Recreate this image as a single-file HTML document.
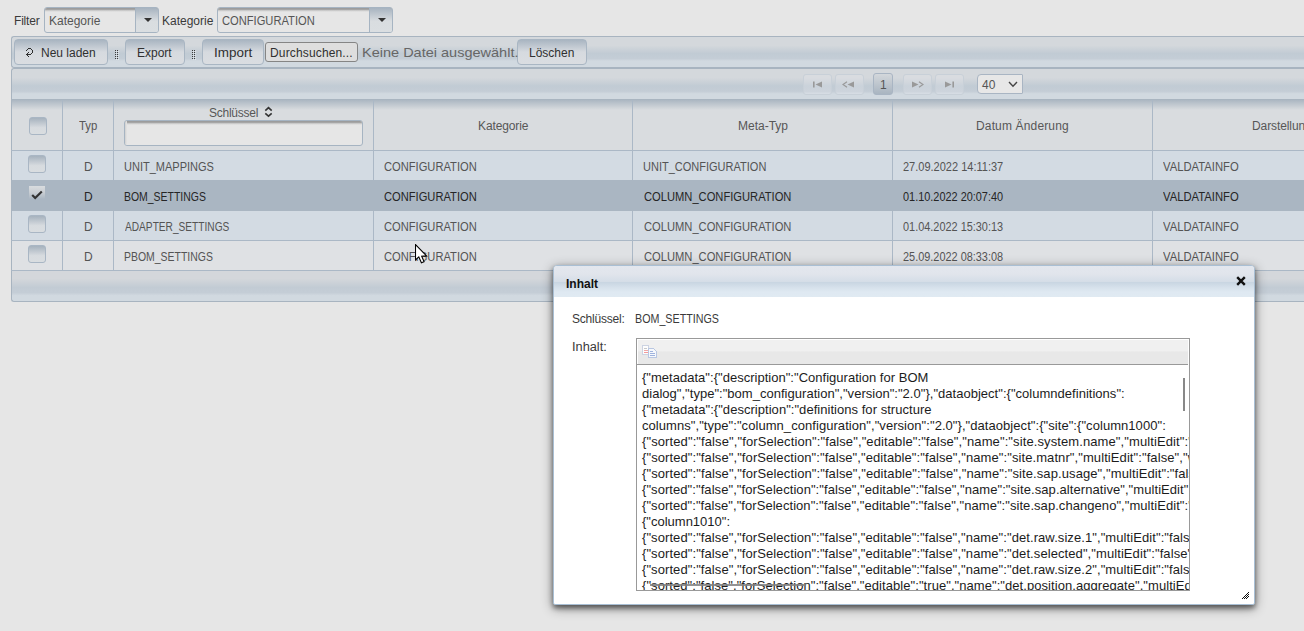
<!DOCTYPE html>
<html><head><meta charset="utf-8">
<style>
*{box-sizing:border-box;margin:0;padding:0}
html,body{width:1304px;height:631px;overflow:hidden}
body{background:#e6e6e6;font-family:"Liberation Sans",sans-serif;font-size:12px;color:#444;position:relative}
.a{position:absolute}
.t{position:absolute;white-space:pre;line-height:20px}
.sel{position:absolute;border:1px solid #a6b4c2;border-radius:3px;background:#e6e6e6;overflow:hidden}
.sel .in{position:absolute;left:0;top:0;right:0;height:4px;background:linear-gradient(#979797 0px,#a6a6a6 1.5px,#d4d4d4 2.8px,#e6e6e6 4px)}
.sel .bt{position:absolute;top:0;bottom:0;right:0;border-left:1px solid #a6b4c2;background:linear-gradient(#a7b3bf 0%,#d9dde0 55%,#dadee1 100%)}
.arr{position:absolute;width:0;height:0;border-left:4px solid transparent;border-right:4px solid transparent;border-top:4px solid #333}
.bar{position:absolute;left:11px;width:1300px;border:1px solid #a8b4c0;border-right:none;background:linear-gradient(#d4d8dc 0%,#d4d8dc 28%,#c1cbd4 55%,#c4cdd6 72%,#d1d9e0 80%,#d1d9e0 100%)}
.btn{position:absolute;top:39px;height:26px;border:1px solid #a9b6c3;border-radius:4px;background:linear-gradient(#a9b5c1 0%,#d6dadf 50%,#dadde1 100%)}
.grip{position:absolute;width:4px;height:10px;background-image:radial-gradient(circle at 1px 1px,#444 0.7px,transparent 1px);background-size:2px 2px}
.cb{position:absolute;width:18px;height:18px;border:1px solid #a9b6c4;border-radius:3px;background:linear-gradient(#a6b2be 0%,#d7dbdf 60%,#d9dde0 100%)}
.pb{position:absolute;top:74px;height:21px;width:29px;border:1px solid #c8d0d8;border-radius:3px;background:rgba(235,238,241,.22)}
.row{position:absolute;left:11px;width:1300px;border-left:1px solid #a8b4c0}
.vl{position:absolute;width:1px;background:#abb8c6}
.hl{position:absolute;left:11px;width:1300px;height:1px;background:#abb8c6}
.ta{position:absolute;white-space:pre;font-family:"Liberation Sans",sans-serif;font-size:13px;line-height:16px;color:#1c1c1c}
</style></head><body>

<!-- filter bar -->
<div class="sel" style="left:44px;top:7px;width:115px;height:26px"><div class="in"></div><div class="bt" style="width:23px"></div></div>
<div class="arr" style="left:144px;top:18px"></div>
<div class="sel" style="left:217px;top:7px;width:176px;height:26px"><div class="in"></div><div class="bt" style="width:23px"></div></div>
<div class="arr" style="left:378px;top:18px"></div>

<!-- toolbar -->
<div class="bar" style="top:36px;height:32px;border-radius:3px 0 0 3px"></div>
<div class="btn" style="left:14px;width:94px"></div>
<svg class="a" style="left:25px;top:47px" width="10" height="11" fill="#2e2e2e"><rect x="3" y="1" width="1" height="1"/><rect x="4" y="1" width="1" height="1"/><rect x="5" y="1" width="1" height="1"/><rect x="2" y="2" width="1" height="1"/><rect x="6" y="2" width="1" height="1"/><rect x="1" y="3" width="1" height="1"/><rect x="7" y="3" width="1" height="1"/><rect x="7" y="4" width="1" height="1"/><rect x="3" y="5" width="1" height="1"/><rect x="7" y="5" width="1" height="1"/><rect x="2" y="6" width="1" height="1"/><rect x="6" y="6" width="1" height="1"/><rect x="1" y="7" width="1" height="1"/><rect x="2" y="7" width="1" height="1"/><rect x="3" y="7" width="1" height="1"/><rect x="4" y="7" width="1" height="1"/><rect x="5" y="7" width="1" height="1"/><rect x="2" y="8" width="1" height="1"/><rect x="3" y="9" width="1" height="1"/></svg>
<svg class="a" style="left:115px;top:50px" width="4" height="11"><rect x="1" y="1" width="1" height="1" fill="#f4f6f8" opacity=".6"/><rect x="1" y="3" width="1" height="1" fill="#f4f6f8" opacity=".6"/><rect x="1" y="5" width="1" height="1" fill="#f4f6f8" opacity=".6"/><rect x="1" y="7" width="1" height="1" fill="#f4f6f8" opacity=".6"/><rect x="1" y="9" width="1" height="1" fill="#f4f6f8" opacity=".6"/><rect x="3" y="1" width="1" height="1" fill="#f4f6f8" opacity=".6"/><rect x="3" y="3" width="1" height="1" fill="#f4f6f8" opacity=".6"/><rect x="3" y="5" width="1" height="1" fill="#f4f6f8" opacity=".6"/><rect x="3" y="7" width="1" height="1" fill="#f4f6f8" opacity=".6"/><rect x="3" y="9" width="1" height="1" fill="#f4f6f8" opacity=".6"/><rect x="0" y="0" width="1" height="1" fill="#3c3c3c"/><rect x="0" y="2" width="1" height="1" fill="#3c3c3c"/><rect x="0" y="4" width="1" height="1" fill="#3c3c3c"/><rect x="0" y="6" width="1" height="1" fill="#3c3c3c"/><rect x="0" y="8" width="1" height="1" fill="#3c3c3c"/><rect x="2" y="0" width="1" height="1" fill="#3c3c3c"/><rect x="2" y="2" width="1" height="1" fill="#3c3c3c"/><rect x="2" y="4" width="1" height="1" fill="#3c3c3c"/><rect x="2" y="6" width="1" height="1" fill="#3c3c3c"/><rect x="2" y="8" width="1" height="1" fill="#3c3c3c"/></svg>
<div class="btn" style="left:125px;width:60px"></div>
<svg class="a" style="left:192px;top:50px" width="4" height="11"><rect x="1" y="1" width="1" height="1" fill="#f4f6f8" opacity=".6"/><rect x="1" y="3" width="1" height="1" fill="#f4f6f8" opacity=".6"/><rect x="1" y="5" width="1" height="1" fill="#f4f6f8" opacity=".6"/><rect x="1" y="7" width="1" height="1" fill="#f4f6f8" opacity=".6"/><rect x="1" y="9" width="1" height="1" fill="#f4f6f8" opacity=".6"/><rect x="3" y="1" width="1" height="1" fill="#f4f6f8" opacity=".6"/><rect x="3" y="3" width="1" height="1" fill="#f4f6f8" opacity=".6"/><rect x="3" y="5" width="1" height="1" fill="#f4f6f8" opacity=".6"/><rect x="3" y="7" width="1" height="1" fill="#f4f6f8" opacity=".6"/><rect x="3" y="9" width="1" height="1" fill="#f4f6f8" opacity=".6"/><rect x="0" y="0" width="1" height="1" fill="#3c3c3c"/><rect x="0" y="2" width="1" height="1" fill="#3c3c3c"/><rect x="0" y="4" width="1" height="1" fill="#3c3c3c"/><rect x="0" y="6" width="1" height="1" fill="#3c3c3c"/><rect x="0" y="8" width="1" height="1" fill="#3c3c3c"/><rect x="2" y="0" width="1" height="1" fill="#3c3c3c"/><rect x="2" y="2" width="1" height="1" fill="#3c3c3c"/><rect x="2" y="4" width="1" height="1" fill="#3c3c3c"/><rect x="2" y="6" width="1" height="1" fill="#3c3c3c"/><rect x="2" y="8" width="1" height="1" fill="#3c3c3c"/></svg>
<div class="btn" style="left:202px;width:62px"></div>
<div class="a" style="left:265px;top:42px;width:93px;height:20px;border:1px solid #858585;border-radius:3px;background:#dedede"></div>
<div class="btn" style="left:517px;width:70px"></div>

<!-- pager -->
<div class="bar" style="top:68px;height:32px;border-bottom:none;border-top-left-radius:3px"></div>
<div class="pb" style="left:803px"></div>
<div class="pb" style="left:835px"></div>
<div class="a" style="left:873px;top:73px;width:20px;height:22px;border:1px solid #a9b5c3;border-radius:3px;background:linear-gradient(#d3d7db,#a9b5c1)"></div>
<div class="pb" style="left:903px"></div>
<div class="pb" style="left:935px"></div>
<svg class="a" style="left:812px;top:81px" width="11" height="7"><rect x="1" y="0.5" width="1.6" height="6" fill="#999"/><path d="M3.5 3.5 L10 0.5 L10 6.5Z" fill="#999"/></svg>
<svg class="a" style="left:842px;top:81px" width="13" height="7"><path d="M5 0.8 L1 3.5 L5 6.2" fill="none" stroke="#999" stroke-width="1.2"/><path d="M5.5 3.5 L12 0.5 L12 6.5Z" fill="#999"/></svg>
<svg class="a" style="left:911px;top:81px" width="13" height="7"><path d="M1 0.5 L7.5 3.5 L1 6.5Z" fill="#999"/><path d="M8 0.8 L12 3.5 L8 6.2" fill="none" stroke="#999" stroke-width="1.2"/></svg>
<svg class="a" style="left:944px;top:81px" width="11" height="7"><path d="M1 0.5 L7.5 3.5 L1 6.5Z" fill="#999"/><rect x="8.4" y="0.5" width="1.6" height="6" fill="#999"/></svg>
<div class="a" style="left:977px;top:74px;width:46px;height:20px;border:1px solid #a9b5c3;border-radius:4px 1px 1px 4px;background:#e7e7e7"></div>
<svg class="a" style="left:1008px;top:81px" width="10" height="7"><path d="M1 1 L5 5.2 L9 1" fill="none" stroke="#444" stroke-width="1.4"/></svg>

<!-- grid header -->
<div class="row" style="top:99px;height:52px;background:linear-gradient(#a7b3bf 0px,#d9dcdf 11px,#d9dcdf 100%)"></div>
<div class="hl" style="top:150px"></div>
<!-- rows -->
<div class="row" style="top:151px;height:29px;background:#d3dbe3"></div>
<div class="row" style="top:210px;height:30px;background:#d3dbe3"></div>
<div class="hl" style="top:240px"></div>
<div class="row" style="top:241px;height:29px;background:#dfe1e4"></div>
<div class="hl" style="top:270px"></div>
<div class="vl" style="left:62px;top:100px;height:171px"></div>
<div class="vl" style="left:113px;top:100px;height:171px"></div>
<div class="vl" style="left:373px;top:100px;height:171px"></div>
<div class="vl" style="left:632px;top:100px;height:171px"></div>
<div class="vl" style="left:892px;top:100px;height:171px"></div>
<div class="vl" style="left:1152px;top:100px;height:171px"></div>
<div class="row" style="top:180px;height:31px;background:#aab6c2"></div>
<!-- footer -->
<div class="bar" style="top:271px;height:31px;border-top:none;border-bottom-left-radius:3px;background:linear-gradient(#d4d7db 0%,#d4d7db 25%,#c2cbd4 55%,#c4cdd6 72%,#d1d9e0 82%,#d1d9e0 100%)"></div>

<div class="cb" style="left:29px;top:117px"></div>
<svg class="a" style="left:264px;top:106px" width="10" height="12"><path d="M1.3 4.6 L4.5 1.6 L7.7 4.6 M1.3 7.4 L4.5 10.2 L7.7 7.4" fill="none" stroke="#333" stroke-width="1.6"/></svg>
<div class="a" style="left:124px;top:120px;width:239px;height:26px;border:1px solid #a6b4c2;border-radius:3px;background:#e6e6e6;overflow:hidden"><div class="a" style="left:0;top:0;right:0;height:4px;background:linear-gradient(#979797 0px,#a6a6a6 1.5px,#d4d4d4 2.8px,#e6e6e6 4px)"></div><div class="a" style="left:0;top:0;bottom:0;width:2px;background:linear-gradient(90deg,#cfcfcf,#e6e6e6)"></div></div>

<div class="cb" style="left:28px;top:155px"></div>
<div class="a" style="left:29px;top:186px;width:16px;height:13px;background:linear-gradient(#d9dcdf 0%,#c9ced3 50%,#aab6c2 100%)"></div>
<svg class="a" style="left:31px;top:190px" width="12" height="10"><path d="M1.2 5 L4.2 8 L10.8 1.5" fill="none" stroke="#333" stroke-width="2.2"/></svg>
<div class="cb" style="left:28px;top:215px"></div>
<div class="cb" style="left:28px;top:245px"></div>

<div class="t" style="left:14px;top:11px;font-size:12px;color:#3a3a3a;letter-spacing:-0.20px">Filter</div>
<div class="t" style="left:49px;top:11px;font-size:12px;color:#555;letter-spacing:0.00px">Kategorie</div>
<div class="t" style="left:162px;top:11px;font-size:12px;color:#3a3a3a;letter-spacing:0.00px">Kategorie</div>
<div class="t" style="left:222.00px;top:11px;font-size:12px;color:#555;transform:scaleX(0.9293);transform-origin:0 0">CONFIGURATION</div>
<div class="t" style="left:41px;top:43px;font-size:12px;color:#303030;letter-spacing:0.00px">Neu laden</div>
<div class="t" style="left:137px;top:43px;font-size:12px;color:#303030;letter-spacing:0.00px">Export</div>
<div class="t" style="left:213.88px;top:43px;font-size:12px;color:#303030;transform:scaleX(1.1212);transform-origin:0 0">Import</div>
<div class="t" style="left:270px;top:43px;font-size:12px;color:#303030;letter-spacing:0.15px">Durchsuchen...</div>
<div class="t" style="left:529px;top:43px;font-size:12px;color:#303030;letter-spacing:0.00px">Löschen</div>
<div class="t" style="left:361.88px;top:43px;font-size:13px;color:#666;transform:scaleX(1.1159);transform-origin:0 0">Keine Datei ausgewählt.</div>
<div class="t" style="left:880px;top:75px;font-size:12px;color:#555;letter-spacing:0.00px">1</div>
<div class="t" style="left:982px;top:75px;font-size:12px;color:#555;letter-spacing:0.00px">40</div>
<div class="t" style="left:79.00px;top:116px;font-size:12px;color:#575757;transform:scaleX(0.9474);transform-origin:0 0">Typ</div>
<div class="t" style="left:209px;top:103px;font-size:12px;color:#575757;letter-spacing:-0.25px">Schlüssel</div>
<div class="t" style="left:478px;top:116px;font-size:12px;color:#575757;letter-spacing:-0.12px">Kategorie</div>
<div class="t" style="left:738px;top:116px;font-size:12px;color:#575757;letter-spacing:0.00px">Meta-Typ</div>
<div class="t" style="left:976px;top:116px;font-size:12px;color:#575757;letter-spacing:0.15px">Datum Änderung</div>
<div class="t" style="left:1252px;top:116px;font-size:12px;color:#575757;letter-spacing:-0.10px">Darstellung</div>
<div class="t" style="left:84px;top:157px;font-size:12px;color:#545454;letter-spacing:0.00px">D</div>
<div class="t" style="left:124.08px;top:157px;font-size:12px;color:#545454;transform:scaleX(0.9175);transform-origin:0 0">UNIT_MAPPINGS</div>
<div class="t" style="left:384.00px;top:157px;font-size:12px;color:#545454;transform:scaleX(0.9293);transform-origin:0 0">CONFIGURATION</div>
<div class="t" style="left:643.08px;top:157px;font-size:12px;color:#545454;transform:scaleX(0.9173);transform-origin:0 0">UNIT_CONFIGURATION</div>
<div class="t" style="left:903.00px;top:157px;font-size:12px;color:#545454;transform:scaleX(0.9174);transform-origin:0 0">27.09.2022 14:11:37</div>
<div class="t" style="left:1163.00px;top:157px;font-size:12px;color:#545454;transform:scaleX(0.9375);transform-origin:0 0">VALDATAINFO</div>
<div class="t" style="left:84px;top:187px;font-size:12px;color:#252525;letter-spacing:0.00px">D</div>
<div class="t" style="left:124.13px;top:187px;font-size:12px;color:#252525;transform:scaleX(0.8710);transform-origin:0 0">BOM_SETTINGS</div>
<div class="t" style="left:384.00px;top:187px;font-size:12px;color:#252525;transform:scaleX(0.9293);transform-origin:0 0">CONFIGURATION</div>
<div class="t" style="left:644.00px;top:187px;font-size:12px;color:#252525;transform:scaleX(0.9304);transform-origin:0 0">COLUMN_CONFIGURATION</div>
<div class="t" style="left:903.00px;top:187px;font-size:12px;color:#252525;transform:scaleX(0.9091);transform-origin:0 0">01.10.2022 20:07:40</div>
<div class="t" style="left:1163.00px;top:187px;font-size:12px;color:#252525;transform:scaleX(0.9375);transform-origin:0 0">VALDATAINFO</div>
<div class="t" style="left:84px;top:217px;font-size:12px;color:#545454;letter-spacing:0.00px">D</div>
<div class="t" style="left:125.00px;top:217px;font-size:12px;color:#545454;transform:scaleX(0.8455);transform-origin:0 0">ADAPTER_SETTINGS</div>
<div class="t" style="left:384.00px;top:217px;font-size:12px;color:#545454;transform:scaleX(0.9293);transform-origin:0 0">CONFIGURATION</div>
<div class="t" style="left:644.00px;top:217px;font-size:12px;color:#545454;transform:scaleX(0.9304);transform-origin:0 0">COLUMN_CONFIGURATION</div>
<div class="t" style="left:903.00px;top:217px;font-size:12px;color:#545454;transform:scaleX(0.9091);transform-origin:0 0">01.04.2022 15:30:13</div>
<div class="t" style="left:1163.00px;top:217px;font-size:12px;color:#545454;transform:scaleX(0.9375);transform-origin:0 0">VALDATAINFO</div>
<div class="t" style="left:84px;top:247px;font-size:12px;color:#545454;letter-spacing:0.00px">D</div>
<div class="t" style="left:124.13px;top:247px;font-size:12px;color:#545454;transform:scaleX(0.8713);transform-origin:0 0">PBOM_SETTINGS</div>
<div class="t" style="left:384.00px;top:247px;font-size:12px;color:#545454;transform:scaleX(0.9293);transform-origin:0 0">CONFIGURATION</div>
<div class="t" style="left:644.00px;top:247px;font-size:12px;color:#545454;transform:scaleX(0.9304);transform-origin:0 0">COLUMN_CONFIGURATION</div>
<div class="t" style="left:903.00px;top:247px;font-size:12px;color:#545454;transform:scaleX(0.9091);transform-origin:0 0">25.09.2022 08:33:08</div>
<div class="t" style="left:1163.00px;top:247px;font-size:12px;color:#545454;transform:scaleX(0.9375);transform-origin:0 0">VALDATAINFO</div>

<!-- cursor -->
<svg class="a" style="left:415px;top:244px" width="13" height="20" viewBox="0 0 13 20"><path d="M0.5 0.6 L0.5 16 L3.8 12.9 L6.4 18.8 L9.1 17.8 L6.7 12.2 L11.6 11.9 Z" fill="#fff" stroke="#000" stroke-width="1.1" stroke-linejoin="miter"/></svg>

<!-- dialog -->
<div class="a" style="left:553px;top:265px;width:702px;height:340px;border:1px solid #a9bfd4;border-radius:4px 4px 2px 2px;background:#fff;box-shadow:0 3px 5px rgba(0,0,0,.45),0 3px 12px rgba(0,0,0,.45);overflow:hidden">
  <div class="a" style="left:0;top:0;right:0;height:31px;background:linear-gradient(#e3e7ee 0px,#e1e5ec 8px,#d4dde7 16px,#c9d6e2 16.5px,#d7e2ec 22px,#dfe9f2 26px,#e0eaf2 31px)"></div>
</div>
<svg class="a" style="left:1236px;top:276px" width="10" height="10"><path d="M1.2 1.2 L8.8 8.8 M8.8 1.2 L1.2 8.8" stroke="#111" stroke-width="2.4"/></svg>
<div class="t" style="left:566px;top:274px;font-size:12px;color:#111;letter-spacing:0.00px;font-weight:700">Inhalt</div>
<div class="t" style="left:572px;top:309px;font-size:12px;color:#3a3a3a;letter-spacing:-0.22px">Schlüssel:</div>
<div class="t" style="left:635.11px;top:309px;font-size:12px;color:#3a3a3a;transform:scaleX(0.8925);transform-origin:0 0">BOM_SETTINGS</div>
<div class="t" style="left:571.94px;top:337px;font-size:12px;color:#3a3a3a;transform:scaleX(1.0645);transform-origin:0 0">Inhalt:</div>
<!-- textarea -->
<div class="a" style="left:636px;top:338px;width:554px;height:253px;border:1px solid #999;background:#fff;overflow:hidden">
  <div class="a" style="left:1px;top:1px;width:550px;height:24px;background:linear-gradient(#f0f0f0 0%,#f0f0f0 45%,#e8e8e8 50%,#e8e8e8 100%)"></div>
  <div class="a" style="left:0;top:25px;width:551px;height:1px;background:#999"></div>
  <svg class="a" style="left:4px;top:5px" width="18" height="16" shape-rendering="crispEdges"><rect x="1.5" y="1.5" width="6" height="9" fill="#fdfdfd" stroke="#ccd3e2" stroke-width="1"/><rect x="3" y="4" width="3" height="1" fill="#c8c8c8"/><rect x="3" y="6" width="4" height="1" fill="#f0a8a8"/><rect x="3" y="8" width="4" height="1" fill="#f39a9a"/><path d="M7.5 4.5 H12.5 L15.5 7.5 V13.5 H7.5 Z" fill="#f6f8fc" stroke="#b9c7e2" stroke-width="1"/><rect x="9" y="7" width="3" height="1" fill="#9fb3dd"/><rect x="9" y="9" width="5" height="1" fill="#9fb3dd"/><rect x="9" y="11" width="5" height="1" fill="#9fb3dd"/></svg>
  <div class="ta" style="left:5px;top:31px;letter-spacing:0.021px">{"metadata":{"description":"Configuration for BOM</div>
<div class="ta" style="left:5px;top:47px;letter-spacing:0.024px">dialog","type":"bom_configuration","version":"2.0"},"dataobject":{"columndefinitions":</div>
<div class="ta" style="left:5px;top:63px;letter-spacing:0.038px">{"metadata":{"description":"definitions for structure</div>
<div class="ta" style="left:5px;top:79px;letter-spacing:0.056px">columns","type":"column_configuration","version":"2.0"},"dataobject":{"site":{"column1000":</div>
<div class="ta" style="left:5px;top:95px;letter-spacing:0.103px">{"sorted":"false","forSelection":"false","editable":"false","name":"site.system.name","multiEdit":"false","width":"150"},"column1001":</div>
<div class="ta" style="left:5px;top:111px;letter-spacing:0.086px">{"sorted":"false","forSelection":"false","editable":"false","name":"site.matnr","multiEdit":"false","width":"150"},"column1002":</div>
<div class="ta" style="left:5px;top:127px;letter-spacing:0.094px">{"sorted":"false","forSelection":"false","editable":"false","name":"site.sap.usage","multiEdit":"false","width":"150"},"column1003":</div>
<div class="ta" style="left:5px;top:143px;letter-spacing:0.066px">{"sorted":"false","forSelection":"false","editable":"false","name":"site.sap.alternative","multiEdit":"false","width":"150"},"column1004":</div>
<div class="ta" style="left:5px;top:159px;letter-spacing:0.057px">{"sorted":"false","forSelection":"false","editable":"false","name":"site.sap.changeno","multiEdit":"false","width":"150"}},"det":</div>
<div class="ta" style="left:5px;top:175px;letter-spacing:0.000px">{"column1010":</div>
<div class="ta" style="left:5px;top:191px;letter-spacing:0.082px">{"sorted":"false","forSelection":"false","editable":"false","name":"det.raw.size.1","multiEdit":"false","width":"150"},"column1011":</div>
<div class="ta" style="left:5px;top:207px;letter-spacing:0.084px">{"sorted":"false","forSelection":"false","editable":"false","name":"det.selected","multiEdit":"false","width":"150"},"column1012":</div>
<div class="ta" style="left:5px;top:223px;letter-spacing:0.082px">{"sorted":"false","forSelection":"false","editable":"false","name":"det.raw.size.2","multiEdit":"false","width":"150"},"column1013":</div>
<div class="ta" style="left:5px;top:239px;letter-spacing:0.060px">{"sorted":"false","forSelection":"false","editable":"true","name":"det.position.aggregate","multiEdit":"false","width":"150"},"column1014":</div>
  <div class="a" style="left:546px;top:39px;width:2px;height:33px;background:#888"></div>
  <div class="a" style="left:13px;top:245px;width:156px;height:2px;background:rgba(128,128,128,.85)"></div>
</div>
<svg class="a" style="left:1241px;top:591px" width="9" height="9" fill="#111"><rect x="1" y="7" width="1" height="1"/><rect x="2" y="6" width="1" height="1"/><rect x="3" y="5" width="1" height="1"/><rect x="3" y="7" width="1" height="1"/><rect x="4" y="4" width="1" height="1"/><rect x="4" y="6" width="1" height="1"/><rect x="5" y="3" width="1" height="1"/><rect x="5" y="5" width="1" height="1"/><rect x="5" y="7" width="1" height="1"/><rect x="6" y="2" width="1" height="1"/><rect x="6" y="4" width="1" height="1"/><rect x="6" y="6" width="1" height="1"/><rect x="7" y="1" width="1" height="1"/><rect x="7" y="3" width="1" height="1"/><rect x="7" y="5" width="1" height="1"/></svg>
</body></html>
